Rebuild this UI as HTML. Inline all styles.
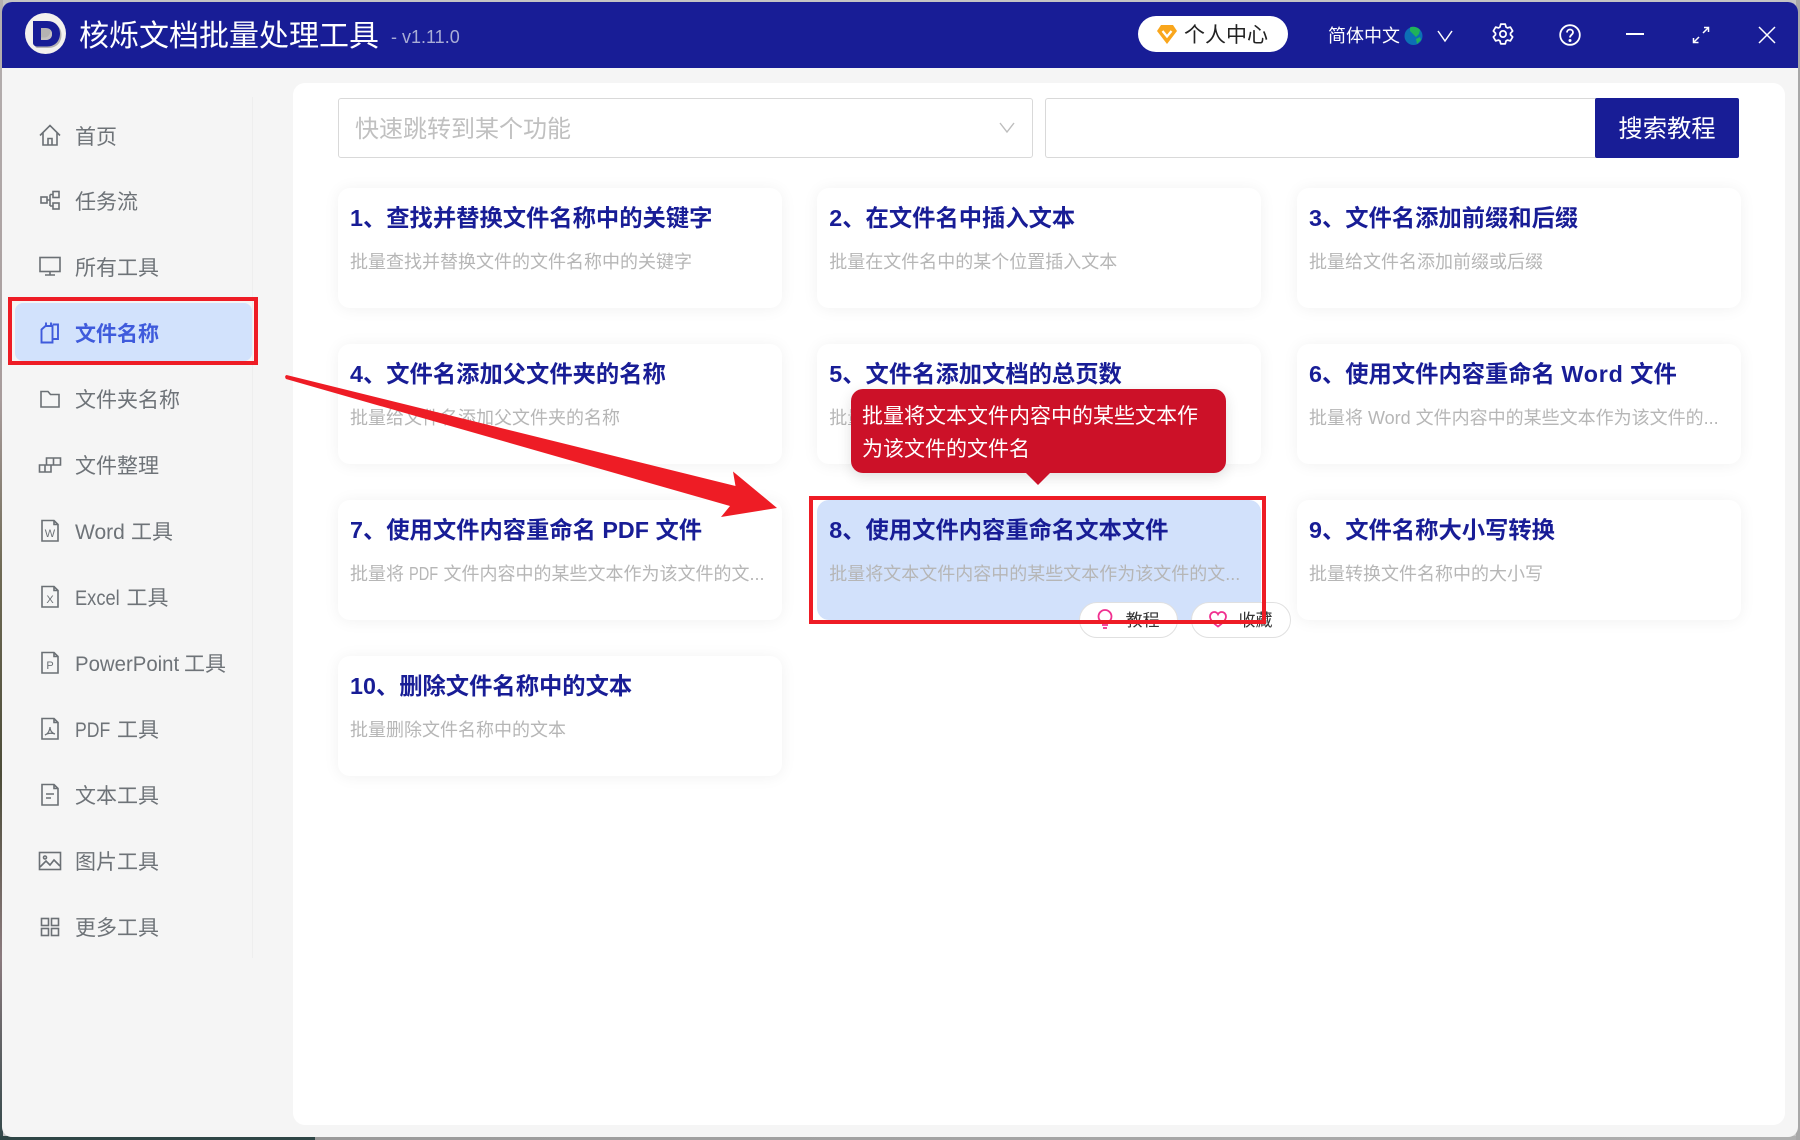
<!DOCTYPE html>
<html lang="zh-CN"><head><meta charset="utf-8"><title>核烁文档批量处理工具</title>
<style>
*{box-sizing:border-box;margin:0;padding:0}
html,body{width:1800px;height:1140px;overflow:hidden}
body{position:relative;font-family:"Liberation Sans","Noto Sans CJK SC",sans-serif;background:#c4c4c4}
.bg{position:absolute;left:0;top:0;width:3px;height:1140px;background:linear-gradient(180deg,#b5b0b0 0,#a89c9c 35%,#6f6a55 50%,#4c4c38 68%,#8b7a7e 84%,#33484a 100%)}
.bb{position:absolute;left:0;bottom:0;width:1800px;height:4px;background:linear-gradient(90deg,#2f4646 0,#2f4646 315px,#9a9a9a 315px,#b0b0b0 100%)}
.br{position:absolute;right:0;top:0;width:4px;height:1140px;background:#a8a8a8}
.win{position:absolute;left:2px;top:2px;width:1796px;height:1135px;background:#f5f5f5;border-radius:10px;overflow:hidden}
.hd{position:absolute;left:0;top:0;width:1796px;height:66px;background:#181d96}
.a{position:absolute;white-space:nowrap}
.panel{position:absolute;left:291px;top:81px;width:1492px;height:1042px;background:#fff;border-radius:12px}
.nav{position:absolute;left:75px;height:30px;line-height:30px;margin-top:2px;font-size:21px;color:#6e7378;white-space:nowrap}
.ic{position:absolute;left:38px;width:24px;height:24px;fill:none;stroke:#6b7075;stroke-width:1.6}
.card{position:absolute;width:443.5px;height:120px;background:#fff;border-radius:12px;box-shadow:0 1px 16px rgba(0,0,0,.06)}
.t{position:absolute;left:12px;top:13px;height:34px;line-height:34px;font-size:23.3px;font-weight:700;color:#181d96;white-space:nowrap}
.d{position:absolute;left:12px;top:60px;height:28px;line-height:28px;font-size:18px;color:#b6b6b6;white-space:nowrap}
.l{display:inline-block;transform-origin:0 50%;white-space:nowrap}
</style></head><body>
<div class="bg"></div><div class="bb"></div><div class="br"></div>
<div class="win">
 <div class="hd"></div>
 <div class="panel"></div>
 <div class="a" style="left:250px;top:95px;width:1px;height:861px;background:#eeeeee"></div>
</div>

<!-- header -->
<svg class="a" style="left:24px;top:12px" width="44" height="44" viewBox="0 0 44 44">
 <circle cx="21.500" cy="21.500" r="20.500" fill="#f3f1ee"/>
 <path d="M11 11H24C33 11 37.500 16 37.500 23S33 36 24 36H14C12 36 11 35 11 33Z" fill="#b5b2b2"/>
 <path d="M9 9H23C32 9 36 15 36 21.500S32 34.500 23 34.500H13C11 34.500 9 33 9 31ZM17 16V28H21.500C25.500 28 28 26 28 22S25.500 16 21.500 16Z" fill="#181d96" fill-rule="evenodd"/>
 <path d="M17 28H21.500C25.500 28 28 26 28 22 28 20 27.500 19 26.500 18 26.500 22 24.500 25.500 20.500 25.500H17Z" fill="#c4c0c0"/>
</svg>
<div class="a" style="left:79px;top:15px;height:44px;line-height:44px;font-size:30px;color:#fff">核烁文档批量处理工具</div>
<div class="a" style="left:391px;top:23px;height:28px;line-height:28px;font-size:18px;color:#a9add6">- v1.11.0</div>

<div class="a" style="left:1138px;top:16px;width:150px;height:36px;background:#fff;border-radius:18px"></div>
<svg class="a" style="left:1156px;top:23px" width="22" height="22" viewBox="0 0 22 22"><path d="M5 2H17L21 8 11 21 1 8Z" fill="#f9a61c"/><path d="M6.500 8L11 13.500 15.500 8" fill="none" stroke="#fff" stroke-width="2.200"/></svg>
<div class="a" style="left:1184px;top:21px;height:30px;line-height:30px;font-size:21px;color:#222">个人中心</div>
<div class="a" style="left:1328px;top:21px;height:30px;line-height:30px;font-size:18px;color:#fff">简体中文</div>
<svg class="a" style="left:1403.500px;top:25.500px" width="19" height="20" viewBox="0 0 19 20"><circle cx="9.500" cy="10" r="9" fill="#0c6fb5"/><path d="M6 1.500C9 0 14 1 16 4L15 8 12 11 9 8 6 5ZM12 13L16 11 17 14 13 18Z" fill="#1fb35a"/></svg>
<svg class="a" style="left:1436px;top:28px" width="18" height="16" viewBox="0 0 18 16"><path d="M2 3L9 13 16 3" fill="none" stroke="#fff" stroke-width="1.500"/></svg>
<svg class="a" style="left:1492px;top:23px" width="22" height="22" viewBox="0 0 24 24" fill="none" stroke="#fff" stroke-width="1.900" stroke-linejoin="round"><circle cx="12" cy="12" r="3.400"/><path d="M8.660 4.510L9.530 1.280H14.470L15.340 4.510 16.820 5.370 20.040 4.500 22.520 8.790 20.160 11.140V12.860L22.520 15.210 20.040 19.500 16.820 18.630 15.340 19.490 14.470 22.720H9.530L8.660 19.490 7.180 18.630 3.960 19.500 1.480 15.210 3.840 12.860V11.140L1.480 8.790 3.960 4.500 7.180 5.370Z"/></svg>
<svg class="a" style="left:1558.500px;top:23.500px" width="22" height="22" viewBox="0 0 22 22" fill="none" stroke="#fff" stroke-width="1.800"><circle cx="11" cy="11" r="9.800"/><path d="M8 8.500C8 6.500 9.500 5.500 11 5.500S14 6.500 14 8.500 11 11 11 13.500"/><circle cx="11" cy="16.500" r=".6" fill="#fff"/></svg>
<div class="a" style="left:1626px;top:33px;width:18px;height:2px;background:#fff"></div>
<svg class="a" style="left:1691px;top:25px" width="20" height="20" viewBox="0 0 20 20" fill="none" stroke="#fff" stroke-width="1.500"><path d="M3 17L8 12M12 8L17 3"/><path d="M13 2.500H17.500V7" /><path d="M7.500 17.500H2.500V13"/></svg>
<svg class="a" style="left:1758px;top:26px" width="18" height="18" viewBox="0 0 18 18"><path d="M1 1L17 17M17 1L1 17" stroke="#fff" stroke-width="1.500"/></svg>

<!-- search -->
<div class="a" style="left:338px;top:98px;width:695px;height:60px;border:1px solid #d9d9d9;border-radius:3px;background:#fff"></div>
<div class="a" style="left:355px;top:112px;height:36px;line-height:36px;font-size:24px;color:#c0c0c0">快速跳转到某个功能</div>
<svg class="a" style="left:999px;top:121px" width="16" height="14" viewBox="0 0 16 14"><path d="M1 2L8 11 15 2" fill="none" stroke="#bdbdbd" stroke-width="1.400"/></svg>
<div class="a" style="left:1045px;top:98px;width:552px;height:60px;border:1px solid #d9d9d9;border-right:0;border-radius:3px 0 0 3px;background:#fff"></div>
<div class="a" style="left:1595px;top:98px;width:144px;height:60px;background:#181d96;border-radius:2px;text-align:center;line-height:64px;font-size:24.300px;color:#fff">搜索教程</div>

<!-- sidebar -->
<div class="a" style="left:15px;top:303px;width:237px;height:58px;background:#d2e2fc;border-radius:8px"></div>

<svg class="ic" style="top:124px;left:37.500px" viewBox="0 0 24 24"><path d="M2 11.500L12 1.500 22 11.500M5 9V21H19V9M10 21V14.500H14V21"/></svg>
<div class="nav" style="top:121px">首页</div>
<svg class="ic" style="top:188px" viewBox="0 0 24 24"><rect x="3" y="9" width="6" height="6"/><rect x="15" y="3.500" width="6" height="6"/><rect x="15" y="15" width="6" height="6"/><path d="M9 12H12M12 6.500V18M12 6.500H15M12 18H15"/></svg>
<div class="nav" style="top:186px">任务流</div>
<svg class="ic" style="top:254px;left:37.500px" viewBox="0 0 24 24"><rect x="2" y="3.500" width="20" height="14"/><path d="M12 17.500V21M7 21H17" /></svg>
<div class="nav" style="top:252px">所有工具</div>
<svg class="ic" style="top:321px;stroke:#3f5bdc;stroke-width:1.900" viewBox="0 0 24 24"><path d="M3.500 8.500L7.500 5H14.500V21.500H3.500ZM8 5V1.500M13 1.500V5M14.500 3.500H20V18H14.500"/></svg>
<div class="nav" style="top:318px;color:#3f5bdc;font-weight:700">文件名称</div>
<svg class="ic" style="top:387px;left:37.500px" viewBox="0 0 24 24"><path d="M3 4.500H10L12.500 7.500H21V20H3Z"/></svg>
<div class="nav" style="top:384px">文件夹名称</div>
<svg class="ic" style="top:452px;left:37.500px" viewBox="0 0 24 24"><path d="M1.500 13H13V20H1.500ZM7 13V20M8.500 13V6H22.500V13H13M15.500 6V13"/></svg>
<div class="nav" style="top:450px">文件整理</div>
<svg class="ic" style="top:519px;left:37.500px" viewBox="0 0 24 24"><path d="M4 1.500H16L20 5.500V22H4ZM16 1.500V5.500H20"/><text x="12" y="18" font-size="11" font-family="Liberation Sans" text-anchor="middle" fill="#6b7075" stroke="none">W</text></svg>
<div class="nav" style="top:516px"><span class="l" style="width:56px">Word</span>工具</div>
<svg class="ic" style="top:585px;left:37.500px" viewBox="0 0 24 24"><path d="M4 1.500H16L20 5.500V22H4ZM16 1.500V5.500H20"/><text x="12" y="18" font-size="11" font-family="Liberation Sans" text-anchor="middle" fill="#6b7075" stroke="none">X</text></svg>
<div class="nav" style="top:582px"><span class="l" style="width:51.500px;transform:scaleX(.87)">Excel</span>工具</div>
<svg class="ic" style="top:651px;left:37.500px" viewBox="0 0 24 24"><path d="M4 1.500H16L20 5.500V22H4ZM16 1.500V5.500H20"/><text x="12" y="18" font-size="11" font-family="Liberation Sans" text-anchor="middle" fill="#6b7075" stroke="none">P</text></svg>
<div class="nav" style="top:648px"><span class="l" style="width:109px;transform:scaleX(.97)">PowerPoint</span>工具</div>
<svg class="ic" style="top:717px;left:37.500px" viewBox="0 0 24 24"><path d="M4 1.500H16L20 5.500V22H4ZM16 1.500V5.500H20"/><path d="M7 18C10 17 12 13 12 10 12 14 14 16 17 17 14 16 10 16 7 18Z" stroke-width="1.200"/></svg>
<div class="nav" style="top:714px"><span class="l" style="width:42px;transform:scaleX(.84)">PDF</span>工具</div>
<svg class="ic" style="top:783px;left:37.500px" viewBox="0 0 24 24"><path d="M4 1.500H16L20 5.500V22H4ZM16 1.500V5.500H20M8 11H16M8 15H13"/></svg>
<div class="nav" style="top:780px">文本工具</div>
<svg class="ic" style="top:849px" viewBox="0 0 24 24"><rect x="1.500" y="3.500" width="21" height="17"/><circle cx="7" cy="8.500" r="1.500"/><path d="M2 18L8 12 12 16 16 11 22 17"/></svg>
<div class="nav" style="top:846px">图片工具</div>
<svg class="ic" style="top:915px" viewBox="0 0 24 24"><rect x="3.500" y="3.500" width="7" height="7"/><rect x="13.500" y="3.500" width="7" height="7"/><rect x="3.500" y="13.500" width="7" height="7"/><rect x="13.500" y="13.500" width="7" height="7"/></svg>
<div class="nav" style="top:912px">更多工具</div>

<!-- cards -->
<div class="card" style="left:338px;top:188px"><div class="t">1、查找并替换文件名称中的关键字</div><div class="d">批量查找并替换文件的文件名称中的关键字</div></div>
<div class="card" style="left:817.300px;top:188px"><div class="t">2、在文件名中插入文本</div><div class="d">批量在文件名中的某个位置插入文本</div></div>
<div class="card" style="left:1297px;top:188px"><div class="t">3、文件名添加前缀和后缀</div><div class="d">批量给文件名添加前缀或后缀</div></div>

<div class="card" style="left:338px;top:344px"><div class="t">4、文件名添加父文件夹的名称</div><div class="d">批量给文件名添加父文件夹的名称</div></div>
<div class="card" style="left:817.300px;top:344px"><div class="t">5、文件名添加文档的总页数</div><div class="d">批量给文件名添加文档的总页数</div></div>
<div class="card" style="left:1297px;top:344px"><div class="t">6、使用文件内容重命名 <span style="letter-spacing:.8px">Word</span> 文件</div><div class="d">批量将 Word 文件内容中的某些文本作为该文件的...</div></div>

<div class="card" style="left:338px;top:500px"><div class="t">7、使用文件内容重命名 PDF 文件</div><div class="d">批量将 <span class="l" style="width:29.500px;transform:scaleX(.81)">PDF</span> 文件内容中的某些文本作为该文件的文...</div></div>
<div class="card" style="left:817.300px;top:500px;background:#d2e1fb;box-shadow:none"><div class="t">8、使用文件内容重命名文本文件</div><div class="d">批量将文本文件内容中的某些文本作为该文件的文...</div></div>
<div class="card" style="left:1297px;top:500px"><div class="t">9、文件名称大小写转换</div><div class="d">批量转换文件名称中的大小写</div></div>

<div class="card" style="left:338px;top:656px"><div class="t">10、删除文件名称中的文本</div><div class="d">批量删除文件名称中的文本</div></div>

<!-- tooltip -->
<div class="a" style="left:851px;top:389px;width:375px;height:84px;background:#cc1128;border-radius:12px;box-shadow:0 4px 14px rgba(0,0,0,.12)"></div>
<svg class="a" style="left:1024px;top:472px" width="28" height="14" viewBox="0 0 28 14"><path d="M1 0H27L14 13Z" fill="#cc1128"/></svg>
<div class="a" style="left:862px;top:400px;height:34px;line-height:34px;font-size:21px;color:#fff">批量将文本文件内容中的某些文本作</div>
<div class="a" style="left:862px;top:433px;height:34px;line-height:34px;font-size:21px;color:#fff">为该文件的文件名</div>

<!-- card buttons -->
<div class="a" style="left:1078.500px;top:602px;width:99px;height:36px;background:#fff;border:1px solid #e0e0e0;border-radius:18px"></div>
<svg class="a" style="left:1096px;top:607px" width="18" height="24" viewBox="0 0 18 24" fill="none" stroke="#f0308f" stroke-width="1.800"><path d="M5.500 15C3.500 13.500 2.500 11.500 2.500 9.500 2.500 6 5.500 3 9 3S15.500 6 15.500 9.500C15.500 11.500 14.500 13.500 12.500 15Z"/><path d="M6 18H12M7 21H11"/></svg>
<div class="a" style="left:1125.500px;top:607px;height:28px;line-height:28px;font-size:17px;color:#333">教程</div>
<div class="a" style="left:1190.500px;top:602px;width:100px;height:36px;background:#fff;border:1px solid #e0e0e0;border-radius:18px"></div>
<svg class="a" style="left:1208px;top:609px" width="20" height="20" viewBox="0 0 20 20"><path d="M10 17.500C5 14 2 11 2 7.500 2 5 4 3 6.300 3 8 3 9.300 4 10 5.300 10.700 4 12 3 13.700 3 16 3 18 5 18 7.500 18 11 15 14 10 17.500Z" fill="none" stroke="#f0308f" stroke-width="1.800"/></svg>
<div class="a" style="left:1238.500px;top:607px;height:28px;line-height:28px;font-size:17px;color:#333">收藏</div>

<!-- annotations -->
<div class="a" style="left:8px;top:297px;width:250px;height:68px;border:4px solid #ee1c25"></div>
<div class="a" style="left:809px;top:495.500px;width:457px;height:128.500px;border:4px solid #ee1c25"></div>
<svg class="a" style="left:0;top:0" width="1800" height="1140" viewBox="0 0 1800 1140"><path d="M286.500 375L735.500 486 733 471.500 777 508 721 517 730 506 286 379Q284 376 286.500 375Z" fill="#ee1c25"/></svg>
</body></html>
